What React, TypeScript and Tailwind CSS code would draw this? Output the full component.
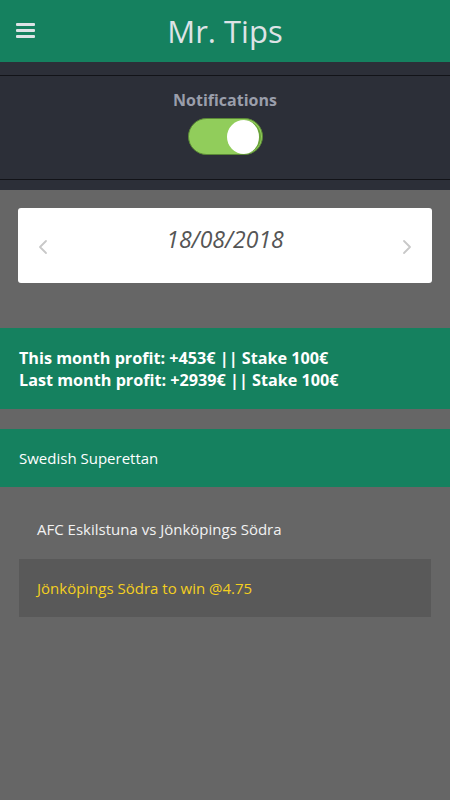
import { useState } from "react";

const font = { fontFamily: '"Open Sans", "Noto Sans", sans-serif' };

const Chevron = ({ dir }: { dir: "left" | "right" }) => (
  <svg width="10" height="16" viewBox="0 0 10 16" fill="none">
    <path
      d={dir === "left" ? "M8 2 L2 8 L8 14" : "M2 2 L8 8 L2 14"}
      stroke="#c8c8c8"
      strokeWidth="1.8"
      strokeLinecap="round"
      strokeLinejoin="round"
    />
  </svg>
);

const App = () => {
  const [enabled, setEnabled] = useState<boolean>(true);

  return (
    <div className="flex min-h-[800px] w-[450px] flex-col bg-[#666666]" style={font}>
      {/* Header */}
      <header className="relative flex h-[62px] items-center justify-center bg-[#15815f]">
        <button className="absolute left-[16px] top-[23px] flex flex-col gap-[3px]">
          <span className="block h-[3px] w-[19px] rounded-[1px] bg-[#dde3e6]" />
          <span className="block h-[3px] w-[19px] rounded-[1px] bg-[#dde3e6]" />
          <span className="block h-[3px] w-[19px] rounded-[1px] bg-[#dde3e6]" />
        </button>
        <h1 className="text-[31px] leading-none text-[#dde3e6]">Mr. Tips</h1>
      </header>

      {/* Notifications */}
      <section className="bg-[#2c2f38] pt-[13px] pb-[10px]">
        <div className="flex flex-col items-center border-y border-[#121318] pt-[13px] pb-[24px]">
          <span className="text-[16px] font-bold leading-[22px] text-[#9a9eab]">Notifications</span>
          <button
            onClick={() => setEnabled(!enabled)}
            className={`mt-[7px] flex h-[37px] w-[75px] items-center rounded-full border border-[#5b8a36] px-[1px] ${
              enabled ? "justify-end bg-[#91cd5b]" : "justify-start bg-[#555]"
            }`}
          >
            <span className="block h-[34px] w-[34px] rounded-full border-r-2 border-[#6aa23a] bg-white" />
          </button>
        </div>
      </section>

      {/* Date picker */}
      <div className="px-[18px] pt-[18px]">
        <div className="flex h-[75px] items-start justify-between rounded-[3px] bg-white px-[20px]">
          <div className="mt-[31px]">
            <Chevron dir="left" />
          </div>
          <span className="mt-[14px] text-[23px] italic text-[#555555]">18/08/2018</span>
          <div className="mt-[31px]">
            <Chevron dir="right" />
          </div>
        </div>
      </div>

      {/* Profit summary */}
      <section className="mt-[45px] bg-[#15815f] px-[19px] pt-[19px] pb-[18px]">
        <p className="text-[16.2px] font-bold leading-[22px] text-white">This month profit: +453€ || Stake 100€</p>
        <p className="text-[16.2px] font-bold leading-[22px] text-white">Last month profit: +2939€ || Stake 100€</p>
      </section>

      {/* League */}
      <section className="mt-[20px] flex h-[58px] items-center bg-[#15815f] px-[19px]">
        <span className="text-[15px] text-white">Swedish Superettan</span>
      </section>

      {/* Match */}
      <div className="px-[19px]">
        <div className="h-[72px] px-[18px] pt-[30px]">
          <span className="text-[15px] leading-[22px] text-[#f2f2f2]">AFC Eskilstuna vs Jönköpings Södra</span>
        </div>
        <div className="flex h-[58px] items-center bg-[#595959] px-[18px]">
          <span className="text-[15px] text-[#f4cf1f]">Jönköpings Södra to win @4.75</span>
        </div>
      </div>
    </div>
  );
};

export default App;
